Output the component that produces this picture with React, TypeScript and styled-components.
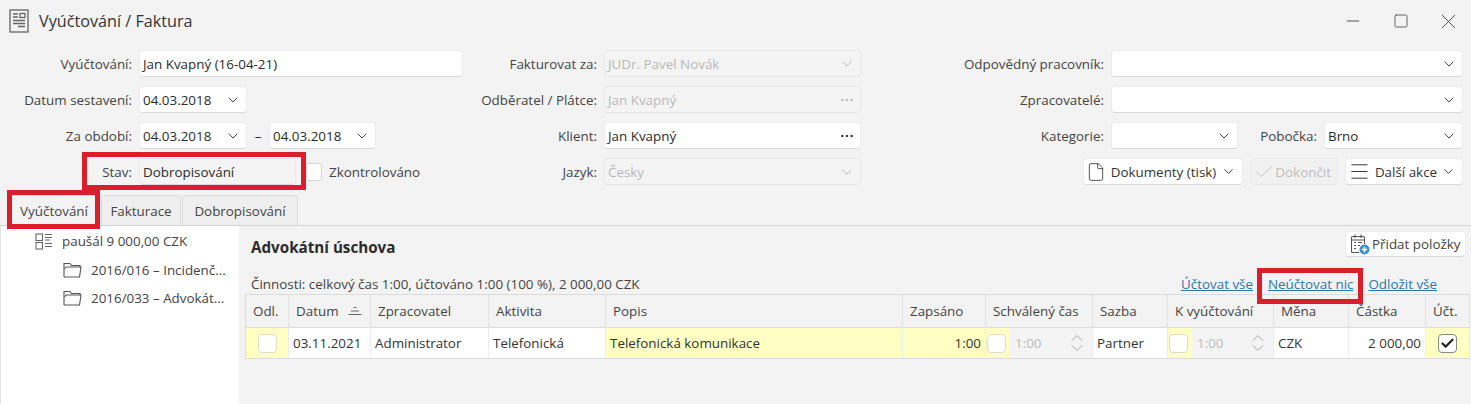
import React from "react";
import styled, { createGlobalStyle } from "styled-components";
import { Check, ChevronDown, ChevronUp, Ellipsis, File, Menu, Minus, Square, X } from "lucide-react";

const GlobalStyle = createGlobalStyle`
  html, body {
    margin: 0;
    padding: 0;
    background: #f3f3f3;
  }
  body {
    font-family: "Open Sans", "Noto Sans", sans-serif;
    font-size: 13.4px;
    color: #2b2b2b;
  }
  * {
    box-sizing: border-box;
  }
`;

const columns = [
  { title: "Odl.", width: 43 },
  { title: "Datum", width: 82 },
  { title: "Zpracovatel", width: 118 },
  { title: "Aktivita", width: 117 },
  { title: "Popis", width: 297 },
  { title: "Zapsáno", width: 83 },
  { title: "Schválený čas", width: 107 },
  { title: "Sazba", width: 75 },
  { title: "K vyúčtování", width: 106 },
  { title: "Měna", width: 75 },
  { title: "Částka", width: 77 },
  { title: "Účt.", width: 44 },
];

function DocIcon() {
  return (
    <svg width="20" height="24" viewBox="0 0 20 24" fill="none" stroke="#666" strokeWidth="1.3">
      <rect x="1" y="1" width="18" height="22" />
      <path d="M4 5h5M4 8h5M4 11.500h12M4 14.500h12M9 17.500h7" />
      <rect x="11" y="4.500" width="5" height="4" />
    </svg>
  );
}

function TreeIcon() {
  return (
    <svg width="18" height="17" viewBox="0 0 18 17" fill="none" stroke="#666" strokeWidth="1.1">
      <rect x="1" y="1" width="6.500" height="6.500" />
      <rect x="1" y="9.500" width="6.500" height="6.500" />
      <path d="M10 1.500h7M10 4.500h7M10 7h5M10 10.500h7M10 13.500h7" />
    </svg>
  );
}

function FolderIcon() {
  return (
    <svg width="19" height="16" viewBox="0 0 19 16" fill="none" stroke="#555" strokeWidth="1.100">
      <path d="M1 15V1.500h6l1.500 2H17V5" />
      <path d="M1 15h15.500L18 5H3.200L1.500 7" />
    </svg>
  );
}

function SortIcon() {
  return (
    <svg width="14" height="10" viewBox="0 0 14 10" fill="none" stroke="#666" strokeWidth="1">
      <path d="M5.500 1.500h3M3 5h8M.5 8.500h13" />
    </svg>
  );
}

function AddItemsIcon() {
  return (
    <svg width="20" height="21" viewBox="0 0 20 21" fill="none">
      <path d="M9 18.500H2.500a1 1 0 0 1-1-1V3.500a1 1 0 0 1 1-1h11a1 1 0 0 1 1 1V10" stroke="#555" strokeWidth="1.100" />
      <path d="M5 .500v3.500M11 .500v3.500M1.500 6h13" stroke="#555" strokeWidth="1.100" />
      <path d="M4 8.500h2M4 11.500h2M4 14.500h2M8 8.500h4M8 11.500h2" stroke="#555" strokeWidth="1.100" />
      <circle cx="14.500" cy="15.500" r="5" fill="#3d8fc9" />
      <path d="M14.500 12.800v5.400M11.800 15.500h5.400" stroke="#fff" strokeWidth="1.500" />
    </svg>
  );
}

function StepperIcon() {
  return (
    <Stepper>
      <ChevronUp size={20} strokeWidth={1} />
      <ChevronDown size={20} strokeWidth={1} />
    </Stepper>
  );
}

function TimeField() {
  return (
    <TimeCell>
      <CellBox />
      <TimeInput>
        1:00
        <StepperIcon />
      </TimeInput>
    </TimeCell>
  );
}

function SelectArrow() {
  return <ChevronDown size={16} strokeWidth={1.5} />;
}

export default function App() {
  return (
    <Page>
      <GlobalStyle />
      <TitleBar>
        <TitleGroup>
          <DocIcon />
          <Title>Vyúčtování / Faktura</Title>
        </TitleGroup>
        <WindowButtons>
          <WindowButton>
            <Minus size={20} strokeWidth={1.1} />
          </WindowButton>
          <WindowButton>
            <Square size={16} strokeWidth={1.200} />
          </WindowButton>
          <WindowButton>
            <X size={25} strokeWidth={0.900} />
          </WindowButton>
        </WindowButtons>
      </TitleBar>

      <Form>
        <FormColumn>
          <Row>
            <Label $width={132}>Vyúčtování:</Label>
            <Field $width={324}>Jan Kvapný (16-04-21)</Field>
          </Row>
          <Row>
            <Label $width={132}>Datum sestavení:</Label>
            <Field $width={108}>
              04.03.2018
              <SelectArrow />
            </Field>
          </Row>
          <Row>
            <Label $width={132}>Za období:</Label>
            <Field $width={108}>
              04.03.2018
              <SelectArrow />
            </Field>
            <Dash>–</Dash>
            <Field $width={107}>
              04.03.2018
              <SelectArrow />
            </Field>
          </Row>
          <Row>
            <Label $width={132}>Stav:</Label>
            <Field $width={157} $readOnly>
              Dobropisování
            </Field>
            <Checkbox />
            <CheckLabel>Zkontrolováno</CheckLabel>
          </Row>
        </FormColumn>

        <FormColumn>
          <Row>
            <Label $width={127}>Fakturovat za:</Label>
            <Field $width={257} $disabled>
              JUDr. Pavel Novák
              <SelectArrow />
            </Field>
          </Row>
          <Row>
            <Label $width={127}>Odběratel / Plátce:</Label>
            <Field $width={257} $disabled>
              Jan Kvapný
              <Ellipsis size={16} />
            </Field>
          </Row>
          <Row>
            <Label $width={127}>Klient:</Label>
            <Field $width={257}>
              Jan Kvapný
              <Ellipsis size={16} />
            </Field>
          </Row>
          <Row>
            <Label $width={127}>Jazyk:</Label>
            <Field $width={257} $disabled>
              Česky
              <SelectArrow />
            </Field>
          </Row>
        </FormColumn>

        <FormColumn>
          <Row>
            <Label $width={234}>Odpovědný pracovník:</Label>
            <Field $width={352}>
              <span />
              <SelectArrow />
            </Field>
          </Row>
          <Row>
            <Label $width={234}>Zpracovatelé:</Label>
            <Field $width={352}>
              <span />
              <SelectArrow />
            </Field>
          </Row>
          <Row>
            <Label $width={234}>Kategorie:</Label>
            <Field $width={127}>
              <span />
              <SelectArrow />
            </Field>
            <Label $width={79}>Pobočka:</Label>
            <Field $width={139}>
              Brno
              <SelectArrow />
            </Field>
          </Row>
          <ButtonRow>
            <ActionButton $width={160}>
              <File size={20} strokeWidth={1} />
              Dokumenty (tisk)
              <ChevronDown size={15} strokeWidth={1.5} />
            </ActionButton>
            <ActionButton $width={88} $disabled>
              <Check size={22} strokeWidth={1} />
              Dokončit
            </ActionButton>
            <ActionButton $width={118}>
              <Menu size={23} strokeWidth={1} />
              Další akce
              <ChevronDown size={15} strokeWidth={1.5} />
            </ActionButton>
          </ButtonRow>
        </FormColumn>
      </Form>

      <TabStrip>
        <Tab $active $width={92}>Vyúčtování</Tab>
        <Tab $width={80}>Fakturace</Tab>
        <Tab $width={116}>Dobropisování</Tab>
      </TabStrip>

      <Body>
        <TreePanel>
          <TreeRow $indent={34}>
            <TreeIcon />
            <span>paušál 9 000,00 CZK</span>
          </TreeRow>
          <TreeRow $indent={62}>
            <FolderIcon />
            <span>2016/016 – Incidenč...</span>
          </TreeRow>
          <TreeRow $indent={62}>
            <FolderIcon />
            <span>2016/033 – Advokát...</span>
          </TreeRow>
        </TreePanel>

        <Main>
          <HeadingRow>
            <Heading>Advokátní úschova</Heading>
            <AddButton>
              <AddItemsIcon />
              Přidat položky
            </AddButton>
          </HeadingRow>

          <InfoRow>
            <span>Činnosti: celkový čas 1:00, účtováno 1:00 (100 %), 2 000,00 CZK</span>
            <Links>
              <TextLink>Účtovat vše</TextLink>
              <TextLink>Neúčtovat nic</TextLink>
              <TextLink>Odložit vše</TextLink>
            </Links>
          </InfoRow>

          <Table>
            {columns.map((column) => (
              <HeaderCell key={column.title}>
                {column.title}
                {column.title === "Datum" && <SortIcon />}
              </HeaderCell>
            ))}

            <Cell $tone="yellow" $center>
              <CellBox />
            </Cell>
            <Cell>03.11.2021</Cell>
            <Cell>Administrator</Cell>
            <Cell>Telefonická</Cell>
            <Cell $tone="yellow">Telefonická komunikace</Cell>
            <Cell $tone="yellow" $right>1:00</Cell>
            <Cell $flush>
              <TimeField />
            </Cell>
            <Cell>Partner</Cell>
            <Cell $flush>
              <TimeField />
            </Cell>
            <Cell>CZK</Cell>
            <Cell $right>2 000,00</Cell>
            <Cell $tone="yellow" $center>
              <CellBox $checked>
                <Check size={15} strokeWidth={3.4} />
              </CellBox>
            </Cell>
          </Table>
        </Main>
      </Body>

      <Highlight $left={82} $top={152} $width={224} $height={38} />
      <Highlight $left={7} $top={190} $width={93} $height={39} />
      <Highlight $left={1257} $top={268} $width={106} $height={36} />
    </Page>
  );
}

const Page = styled.div`
  position: relative;
  width: 1471px;
  height: 404px;
  overflow: hidden;
  background: #f3f3f3;
`;

const TitleBar = styled.header`
  display: flex;
  align-items: center;
  justify-content: space-between;
  height: 42px;
  padding: 0 0 0 9px;
`;

const TitleGroup = styled.div`
  display: flex;
  align-items: center;
  gap: 10px;
`;

const Title = styled.h1`
  margin: 0;
  font-size: 16.2px;
  font-weight: 400;
  color: #333;
`;

const WindowButtons = styled.div`
  display: flex;
  align-items: center;
  margin-right: -1px;
  color: #444;
`;

const WindowButton = styled.span`
  display: flex;
  align-items: center;
  justify-content: center;
  width: 47.500px;
`;

const Form = styled.section`
  display: grid;
  grid-template-columns: 470px 400px 1fr;
  height: 143px;
  padding-top: 8px;
`;

const FormColumn = styled.div`
  display: flex;
  flex-direction: column;
  gap: 9px;
`;

const Row = styled.div`
  display: flex;
  align-items: center;
  height: 27px;
`;

const ButtonRow = styled.div`
  display: flex;
  justify-content: flex-end;
  gap: 7px;
  width: 593px;
  height: 27px;
`;

const Label = styled.label<{ $width: number }>`
  flex: none;
  width: ${({ $width }) => $width}px;
  margin-right: 7px;
  text-align: right;
  white-space: nowrap;
  color: #444;
`;

const Field = styled.div<{ $width: number; $disabled?: boolean; $readOnly?: boolean }>`
  display: flex;
  align-items: center;
  justify-content: space-between;
  flex: none;
  width: ${({ $width }) => $width}px;
  height: 27px;
  padding: 0 5px 0 3px;
  border-radius: 4px;
  white-space: nowrap;
  background: ${({ $disabled, $readOnly }) => ($disabled || $readOnly ? "#f4f4f4" : "#fff")};
  color: ${({ $disabled }) => ($disabled ? "#b9b9b9" : "#2b2b2b")};
  border: 1px solid ${({ $disabled }) => ($disabled ? "#e8e8e8" : "#ececec")};
  border-bottom-color: ${({ $disabled }) => ($disabled ? "#e4e4e4" : "#d9d9d9")};

  svg {
    flex: none;
    color: ${({ $disabled }) => ($disabled ? "#bdbdbd" : "#444")};
  }
`;

const Dash = styled.span`
  flex: none;
  width: 22px;
  text-align: center;
`;

const Checkbox = styled.span`
  flex: none;
  width: 16px;
  height: 18px;
  margin-left: 10px;
  border: 1px solid #d6d6d6;
  border-radius: 3px;
  background: #fff;
`;

const CheckLabel = styled.span`
  margin-left: 7px;
  color: #444;
`;

const ActionButton = styled.button<{ $width: number; $disabled?: boolean }>`
  display: flex;
  align-items: center;
  justify-content: space-between;
  width: ${({ $width }) => $width}px;
  height: 27px;
  padding: 0 6px 0 2px;
  border-radius: 4px;
  font: inherit;
  white-space: nowrap;
  background: ${({ $disabled }) => ($disabled ? "#f1f1f1" : "#fff")};
  color: ${({ $disabled }) => ($disabled ? "#bdbdbd" : "#333")};
  border: 1px solid #ececec;
  border-bottom-color: ${({ $disabled }) => ($disabled ? "#e8e8e8" : "#d9d9d9")};

  svg {
    flex: none;
  }
`;

const TabStrip = styled.nav`
  display: flex;
  align-items: flex-end;
  gap: 1px;
  height: 31px;
  padding-left: 8px;
  margin-top: 10px;
  border-bottom: 1px solid #d6d6d6;
`;

const Tab = styled.div<{ $active?: boolean; $width: number }>`
  display: flex;
  align-items: center;
  justify-content: center;
  width: ${({ $width }) => $width}px;
  height: 30px;
  border: 1px solid #dcdcdc;
  border-bottom: none;
  border-radius: 4px 4px 0 0;
  background: ${({ $active }) => ($active ? "#f3f3f3" : "#efefef")};
  color: #444;
`;

const Body = styled.div`
  display: flex;
  height: 178px;
`;

const TreePanel = styled.aside`
  flex: none;
  width: 239px;
  padding-top: 1px;
  border-left: 1px solid #e6e6e6;
  background: #fff;
`;

const TreeRow = styled.div<{ $indent: number }>`
  display: flex;
  align-items: center;
  gap: 9px;
  height: 28.500px;
  padding-left: ${({ $indent }) => $indent}px;
  white-space: nowrap;
  color: #444;

  svg {
    flex: none;
  }
`;

const Main = styled.main`
  flex: 1;
  min-width: 0;
  padding: 5px 1px 0 6px;
`;

const HeadingRow = styled.div`
  display: flex;
  align-items: center;
  justify-content: space-between;
  height: 26px;
  padding: 0 4px 0 6px;
`;

const Heading = styled.h2`
  margin: 6px 0 0;
  font-size: 15.200px;
  font-weight: 700;
  color: #2b2b2b;
`;

const AddButton = styled.button`
  display: flex;
  align-items: center;
  gap: 2px;
  width: 121px;
  height: 26px;
  padding: 0 4px;
  border: 1px solid #ececec;
  border-bottom-color: #d9d9d9;
  border-radius: 4px;
  font: inherit;
  white-space: nowrap;
  background: #fff;
  color: #444;
`;

const InfoRow = styled.div`
  display: flex;
  align-items: center;
  justify-content: space-between;
  height: 37px;
  padding: 17px 33px 0 6px;
  color: #444;
`;

const Links = styled.div`
  display: flex;
  gap: 15px;
`;

const TextLink = styled.a`
  color: #2a77ad;
  text-decoration: underline;
  cursor: pointer;
`;

const Table = styled.div`
  display: grid;
  grid-template-columns: ${columns.map((column) => `${column.width}px`).join(" ")};
  grid-template-rows: 33px 30px;
  width: 1225px;
  border: 1px solid #dcdcdc;
`;

const HeaderCell = styled.div`
  display: flex;
  align-items: center;
  gap: 9px;
  padding: 0 7px;
  white-space: nowrap;
  color: #444;
  border-right: 1px solid #e2e2e2;
  border-bottom: 1px solid #dcdcdc;
  background: #f3f3f3;
`;

const Cell = styled.div<{ $tone?: "yellow"; $center?: boolean; $right?: boolean; $flush?: boolean }>`
  display: flex;
  align-items: center;
  justify-content: ${({ $center, $right }) => ($center ? "center" : $right ? "flex-end" : "flex-start")};
  padding: ${({ $flush }) => ($flush ? "0" : "0 4px")};
  white-space: nowrap;
  color: #333;
  border-right: 1px solid #ececec;
  background: ${({ $tone }) => ($tone === "yellow" ? "#ffffc4" : "#fff")};
`;

const CellBox = styled.span<{ $checked?: boolean }>`
  display: flex;
  align-items: center;
  justify-content: center;
  flex: none;
  width: 19px;
  height: 19px;
  border: 1px solid ${({ $checked }) => ($checked ? "#8a8a7c" : "#dcdcc8")};
  border-radius: 4px;
  background: #fff;
  color: #222;
`;

const TimeCell = styled.div`
  display: flex;
  align-items: center;
  width: 100%;
  height: 100%;
  padding-left: 1px;
  background: #ffffc4;
`;

const TimeInput = styled.div`
  display: flex;
  align-items: center;
  justify-content: space-between;
  flex: 1;
  height: 100%;
  margin-left: 4px;
  padding: 0 5px;
  background: #f4f4f4;
  color: #bcbcbc;
`;

const Stepper = styled.span`
  display: flex;
  flex-direction: column;
  color: #9a9a9a;

  svg {
    margin: -5px 0;
  }
`;

const Highlight = styled.div<{ $left: number; $top: number; $width: number; $height: number }>`
  position: absolute;
  left: ${({ $left }) => $left}px;
  top: ${({ $top }) => $top}px;
  width: ${({ $width }) => $width}px;
  height: ${({ $height }) => $height}px;
  border: 5px solid #d91f2c;
  pointer-events: none;
`;
